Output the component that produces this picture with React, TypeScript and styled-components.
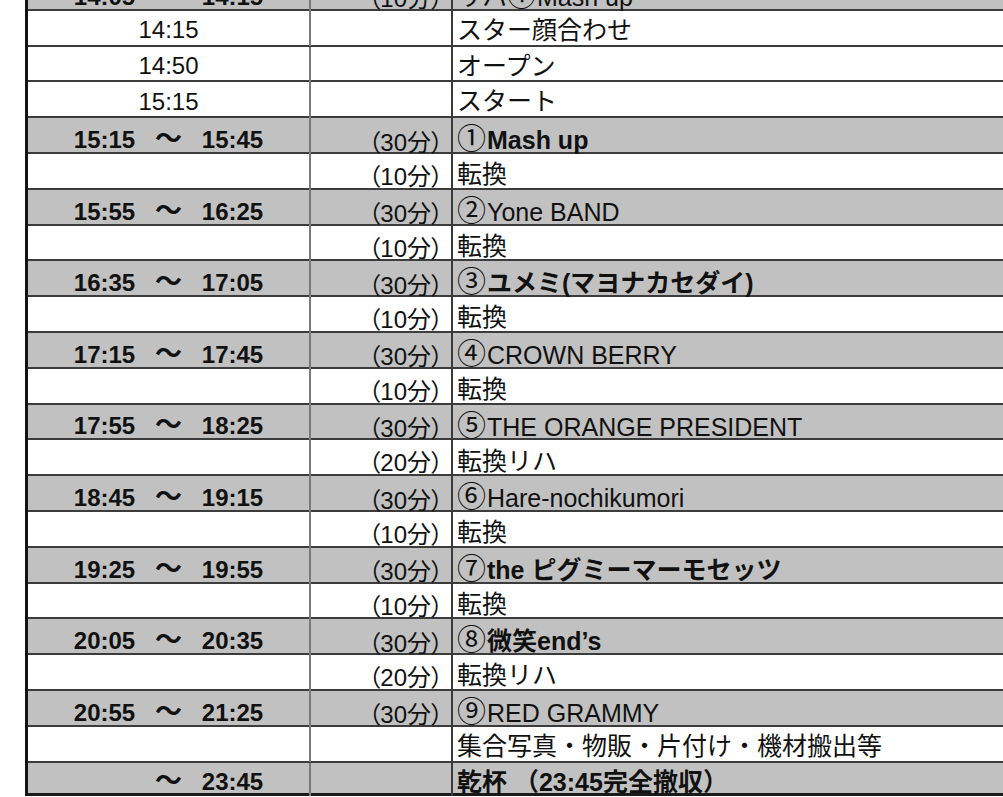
import styled, { createGlobalStyle } from "styled-components";

type Row = {
  start?: string;
  end?: string;
  time?: string;
  dur?: string;
  name: string;
  gray?: boolean;
  strong?: boolean;
};

const rows: Row[] = [
  { start: "14:05", end: "14:15", dur: "10", name: "リハ①Mash up", gray: true },
  { time: "14:15", name: "スター顔合わせ" },
  { time: "14:50", name: "オープン" },
  { time: "15:15", name: "スタート" },
  { start: "15:15", end: "15:45", dur: "30", name: "①Mash up", gray: true, strong: true },
  { dur: "10", name: "転換" },
  { start: "15:55", end: "16:25", dur: "30", name: "②Yone BAND", gray: true },
  { dur: "10", name: "転換" },
  { start: "16:35", end: "17:05", dur: "30", name: "③ユメミ(マヨナカセダイ)", gray: true, strong: true },
  { dur: "10", name: "転換" },
  { start: "17:15", end: "17:45", dur: "30", name: "④CROWN BERRY", gray: true },
  { dur: "10", name: "転換" },
  { start: "17:55", end: "18:25", dur: "30", name: "⑤THE ORANGE PRESIDENT", gray: true },
  { dur: "20", name: "転換リハ" },
  { start: "18:45", end: "19:15", dur: "30", name: "⑥Hare-nochikumori", gray: true },
  { dur: "10", name: "転換" },
  { start: "19:25", end: "19:55", dur: "30", name: "⑦the ピグミーマーモセッツ", gray: true, strong: true },
  { dur: "10", name: "転換" },
  { start: "20:05", end: "20:35", dur: "30", name: "⑧微笑end’s", gray: true, strong: true },
  { dur: "20", name: "転換リハ" },
  { start: "20:55", end: "21:25", dur: "30", name: "⑨RED GRAMMY", gray: true },
  { name: "集合写真・物販・片付け・機材搬出等" },
  { start: "", end: "23:45", name: "乾杯 （23:45完全撤収）", gray: true, strong: true },
];

// 丸数字だけ少し大きく
const splitMark = (name: string) => {
  const idx = name.search(/[①-⑨]/);
  if (idx < 0) return { before: name, mark: "", after: "" };
  return { before: name.slice(0, idx), mark: name[idx], after: name.slice(idx + 1) };
};

export default function App() {
  return (
    <>
      <GlobalStyle />
      <St.Sheet>
        {rows.map((row, i) => {
          const isLast = i === rows.length - 1;
          const isRange = row.end !== undefined;
          const { before, mark, after } = splitMark(row.name);
          return (
            <St.Row key={i} gray={!!row.gray} last={isLast}>
              <St.TimeCell bold={!!row.gray}>
                {isRange ? (
                  <St.Range>
                    <span>{row.start}</span>
                    <St.Tilde>～</St.Tilde>
                    <span>{row.end}</span>
                  </St.Range>
                ) : (
                  row.time
                )}
              </St.TimeCell>
              <St.DurCell>{row.dur ? `（${row.dur}分）` : ""}</St.DurCell>
              <St.NameCell bold={!!row.strong}>
                <St.Label>
                  {before}
                  {mark && <St.Mark>{mark}</St.Mark>}
                  {after}
                </St.Label>
              </St.NameCell>
            </St.Row>
          );
        })}
      </St.Sheet>
    </>
  );
}

const GlobalStyle = createGlobalStyle`
  html, body {
    margin: 0;
    background: #ffffff;
    overflow: hidden;
  }
  body {
    font-family: "Liberation Sans", "Noto Sans CJK JP", sans-serif;
    color: #111111;
  }
`;

const St = {
  Sheet: styled.div`
    margin: -25px 0 0 25px;
    width: 1000px;
    border-left: 3px solid #141414;
  `,
  Row: styled.div<{ gray: boolean; last: boolean }>`
    display: grid;
    grid-template-columns: 283px 142px 1fr;
    box-sizing: border-box;
    height: ${({ last }) => (last ? "33px" : "35.8px")};
    border-bottom: ${({ last }) => (last ? "3px solid #1a1a1a" : "2px solid #3c3c3c")};
    background-color: ${({ gray }) => (gray ? "#c1c1c1" : "#ffffff")};
  `,
  TimeCell: styled.div<{ bold: boolean }>`
    display: flex;
    align-items: center;
    justify-content: center;
    padding-top: 3px;
    border-right: 2px solid #7a7a7a;
    font-size: 24px;
    line-height: 1;
    font-weight: ${({ bold }) => (bold ? 700 : 400)};
  `,
  Range: styled.div`
    display: grid;
    grid-template-columns: 62px 32px 62px;
    column-gap: 17px;
    text-align: center;
    align-items: center;
  `,
  Tilde: styled.span`
    font-size: 27px;
    line-height: 1;
    margin-top: -1px;
  `,
  DurCell: styled.div`
    display: flex;
    align-items: center;
    justify-content: flex-end;
    padding: 3px 8px 0 0;
    border-right: 2px solid #3a3a3a;
    font-size: 24px;
    font-feature-settings: "palt";
  `,
  NameCell: styled.div<{ bold: boolean }>`
    display: flex;
    align-items: center;
    padding: 3px 0 0 4px;
    font-size: 25px;
    white-space: pre;
    font-weight: ${({ bold }) => (bold ? 700 : 400)};
  `,
  Label: styled.span`
    line-height: 1.3;
  `,
  Mark: styled.span`
    font-size: 29px;
    font-weight: 400;
    margin-right: 1px;
  `,
};
